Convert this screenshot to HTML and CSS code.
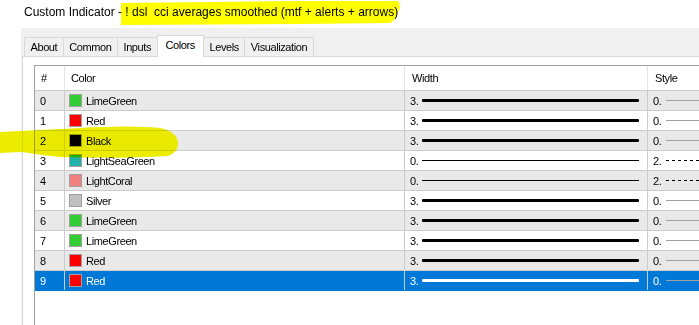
FILE: index.html
```html
<!DOCTYPE html>
<html lang="en">
<head>
    <meta charset="UTF-8">
    <meta name="viewport" content="width=device-width, initial-scale=1.0">
    <title>Custom Indicator - Colors</title>
    <link rel="stylesheet" href="styles.css">
</head>
<body>
    <div class="title">Custom Indicator - ! dsl&nbsp; cci averages smoothed (mtf + alerts + arrows)</div>

    <div class="window">
        <div class="tabs">
            <div class="tab">About</div>
            <div class="tab">Common</div>
            <div class="tab">Inputs</div>
            <div class="tab active">Colors</div>
            <div class="tab">Levels</div>
            <div class="tab">Visualization</div>
        </div>

        <div class="panel">
            <div class="grid">
                <div class="row head">
                    <div class="cell num">#</div>
                    <div class="cell color">Color</div>
                    <div class="cell width">Width</div>
                    <div class="cell style">Style</div>
                </div>

                <div class="row">
                    <div class="cell num">0</div>
                    <div class="cell color"><span class="swatch limegreen"></span>LimeGreen</div>
                    <div class="cell width">3.<span class="line thick"></span></div>
                    <div class="cell style">0.<span class="sline"></span></div>
                </div>
                <div class="row">
                    <div class="cell num">1</div>
                    <div class="cell color"><span class="swatch red"></span>Red</div>
                    <div class="cell width">3.<span class="line thick"></span></div>
                    <div class="cell style">0.<span class="sline"></span></div>
                </div>
                <div class="row">
                    <div class="cell num">2</div>
                    <div class="cell color"><span class="swatch black"></span>Black</div>
                    <div class="cell width">3.<span class="line thick"></span></div>
                    <div class="cell style">0.<span class="sline"></span></div>
                </div>
                <div class="row">
                    <div class="cell num">3</div>
                    <div class="cell color"><span class="swatch seagreen"></span>LightSeaGreen</div>
                    <div class="cell width">0.<span class="line"></span></div>
                    <div class="cell style">2.<span class="sline dashed"></span></div>
                </div>
                <div class="row">
                    <div class="cell num">4</div>
                    <div class="cell color"><span class="swatch coral"></span>LightCoral</div>
                    <div class="cell width">0.<span class="line"></span></div>
                    <div class="cell style">2.<span class="sline dashed"></span></div>
                </div>
                <div class="row">
                    <div class="cell num">5</div>
                    <div class="cell color"><span class="swatch silver"></span>Silver</div>
                    <div class="cell width">3.<span class="line thick"></span></div>
                    <div class="cell style">0.<span class="sline"></span></div>
                </div>
                <div class="row">
                    <div class="cell num">6</div>
                    <div class="cell color"><span class="swatch limegreen"></span>LimeGreen</div>
                    <div class="cell width">3.<span class="line thick"></span></div>
                    <div class="cell style">0.<span class="sline"></span></div>
                </div>
                <div class="row">
                    <div class="cell num">7</div>
                    <div class="cell color"><span class="swatch limegreen"></span>LimeGreen</div>
                    <div class="cell width">3.<span class="line thick"></span></div>
                    <div class="cell style">0.<span class="sline"></span></div>
                </div>
                <div class="row">
                    <div class="cell num">8</div>
                    <div class="cell color"><span class="swatch red"></span>Red</div>
                    <div class="cell width">3.<span class="line thick"></span></div>
                    <div class="cell style">0.<span class="sline"></span></div>
                </div>
                <div class="row selected">
                    <div class="cell num">9</div>
                    <div class="cell color"><span class="swatch red"></span>Red</div>
                    <div class="cell width">3.<span class="line thick"></span></div>
                    <div class="cell style">0.<span class="sline"></span></div>
                </div>
            </div>
        </div>
    </div>

    <!-- highlighter marks drawn over the screenshot -->
    <svg class="marker" width="699" height="325" viewBox="0 0 699 325">
        <path class="mark-title" d="M121 3 L300 1 L398 1 Q401 4 399 10 L394 20 Q392 23 388 23 L300 24 L121 25 Z"/>
        <path class="mark-row" d="M0 132 Q40 130 80 128 Q130 125 160 128 Q176 131 178 142 Q179 152 168 156 Q120 159 60 157 Q40 155 22 152 L0 153 Z"/>
    </svg>
</body>
</html>
```

FILE: styles.css
```css
body {
    font-family: "Liberation Sans", Arial, sans-serif;
    font-size: 11px;
    letter-spacing: -0.4px;
    margin: 0;
    padding: 0;
    width: 699px;
    height: 325px;
    overflow: hidden;
    background-color: #ffffff;
    color: #000000;
}

.title {
    height: 24px;
    padding: 4px 0 0 24px;
    font-size: 12px;
    letter-spacing: 0;
    line-height: 16px;
}

.window {
    margin-left: 21px;
    height: 297px;
    background-color: #f0f0f0;
}

.tabs {
    display: flex;
    align-items: flex-end;
    height: 28px;
    padding-left: 3px;
}

.tab {
    height: 18px;
    line-height: 18px;
    padding: 0 5.5px;
    margin-left: -1px;
    border: 1px solid #d9d9d9;
    border-bottom: none;
    background-color: #f0f0f0;
}

.tab:first-child {
    margin-left: 0;
}

.tab.active {
    height: 21px;
    line-height: 19px;
    padding: 0 8px;
    margin-bottom: -1px;
    position: relative;
    z-index: 1;
    background-color: #ffffff;
}

.panel {
    margin-left: 1px;
    height: 260px;
    border-top: 1px solid #d9d9d9;
    border-left: 1px solid #d9d9d9;
    background-color: #ffffff;
    padding: 8px 0 0 11px;
}

.grid {
    height: 259px;
    border-top: 1px solid #a0a0a0;
    border-left: 1px solid #a0a0a0;
    background-color: #ffffff;
}

.row {
    display: flex;
    height: 19px;
    border-bottom: 1px solid #cbcbcb;
    background-color: #ffffff;
}

.row:nth-child(even) {
    background-color: #e9e9e9;
}

.row.head {
    height: 24px;
    background-color: #ffffff;
}

.cell {
    display: flex;
    align-items: center;
    flex-shrink: 0;
    border-right: 1px solid #cbcbcb;
}

.head .cell {
    border-right-color: #e6e6e6;
}

.num {
    width: 24px;
    padding-left: 5px;
}

.head .num {
    width: 23px;
    padding-left: 6px;
}

.color {
    width: 335px;
    padding-left: 4px;
}

.head .color {
    width: 333px;
    padding-left: 6px;
}

.width {
    width: 237px;
    padding-left: 5px;
}

.head .width {
    width: 235px;
    padding-left: 7px;
}

.style {
    flex: 1;
    padding-left: 5px;
    border-right: none;
}

.head .style {
    padding-left: 7px;
}

.swatch {
    width: 11px;
    height: 11px;
    border: 1px solid #a0a0a0;
    margin-right: 4px;
}

.limegreen { background-color: #32cd32; }
.red { background-color: #ff0000; }
.black { background-color: #000000; }
.seagreen { background-color: #20b2aa; }
.coral { background-color: #f08080; }
.silver { background-color: #c0c0c0; }

.line {
    flex: 1;
    height: 1px;
    margin: 0 8px 0 4px;
    background-color: #000000;
}

.line.thick {
    height: 3px;
    border-radius: 1px;
}

.sline {
    width: 60px;
    height: 1px;
    margin-left: 5px;
    background-color: #a0a0a0;
}

.sline.dashed {
    background: repeating-linear-gradient(90deg, #000000 0 3px, transparent 3px 6px);
}

.row.selected {
    background-color: #0078d7;
    color: #ffffff;
    border-bottom-color: #0078d7;
}

.selected .line {
    background-color: #ffffff;
}

.marker {
    position: absolute;
    left: 0;
    top: 0;
    pointer-events: none;
    mix-blend-mode: darken;
}

.mark-title {
    fill: #ffff00;
}

.mark-row {
    fill: #ecec00;
}
```
